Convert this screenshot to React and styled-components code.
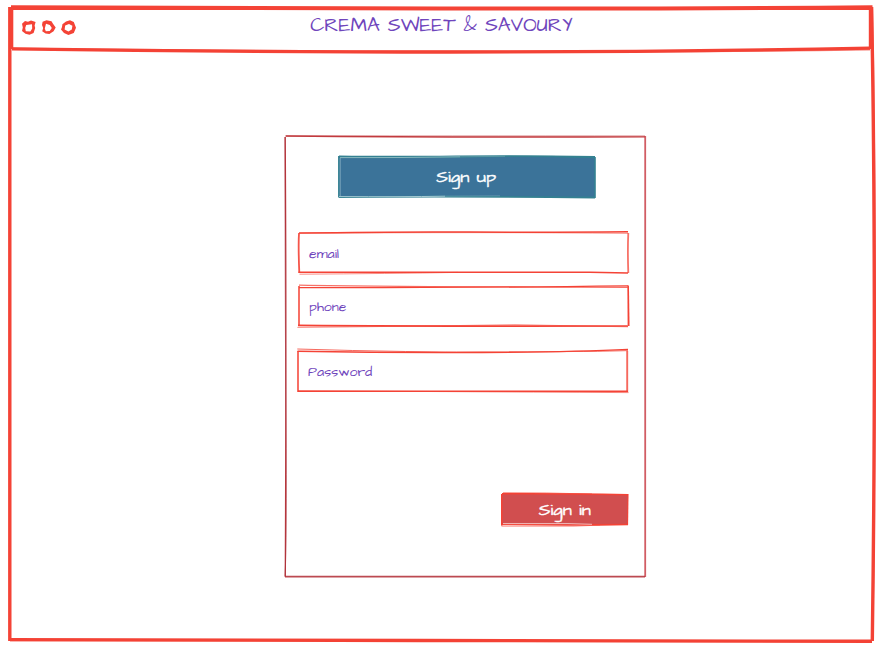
import React from "react";
import styled, { createGlobalStyle } from "styled-components";

const GlobalStyle = createGlobalStyle`
  * { box-sizing: border-box; }
  html, body, #root { height: 100%; }
  body { margin: 0; background: #fff; overflow: hidden; }
`;

const hand = `"Architects Daughter", Inter, "Open Sans", sans-serif`;

const Page = styled.div`
  height: 646px;
  width: 878px;
  padding: 8px 5px 5px 10px;
`;

const Window = styled.main`
  position: relative;
  width: 863px;
  height: 633px;
  display: flex;
  flex-direction: column;
  align-items: center;
`;

const TitleBar = styled.header`
  position: relative;
  width: 861px;
  height: 42px;
  display: grid;
  grid-template-columns: 100px 1fr 100px;
  align-items: center;
`;

const Dots = styled.svg`
  width: 58px;
  height: 18px;
  margin: -5px 0 0 9px;
  overflow: visible;
`;

const Title = styled.h1`
  margin: 0;
  padding: 0 0 8px;
  text-align: center;
  white-space: nowrap;
  color: #6f45bc;
  font: 400 20px/22px ${hand};
`;

const Card = styled.form`
  position: relative;
  width: 360px;
  height: 441px;
  margin: 86px 0 0 46px;
  padding: 20px 17px 0 13px;
  display: flex;
  flex-direction: column;
`;

const Outline = styled.svg`
  position: absolute;
  inset: 0;
  width: 100%;
  height: 100%;
  overflow: visible;
  fill: none;
  pointer-events: none;
`;

const Button = styled.button`
  position: relative;
  align-self: ${(p) => (p.$end ? "flex-end" : "center")};
  width: ${(p) => p.$width}px;
  height: ${(p) => p.$height}px;
  margin: ${(p) => p.$margin};
  padding: 0;
  border: 0;
  background: ${(p) => p.$fill};
  color: #fff;
  font: 400 16px/20px ${hand};
  -webkit-text-stroke: 0.35px #fff;
`;

const ButtonLabel = styled.span`
  position: relative;
  display: inline-block;
  transform: scaleX(1.14);
`;

const Field = styled.label`
  position: relative;
  width: 329px;
  height: ${(p) => p.$height || 40}px;
  margin: ${(p) => p.$margin};
  padding: ${(p) => p.$drop || 0}px 0 0 10.6px;
  display: flex;
  align-items: center;
  color: #6f45bc;
  font: 400 14px/18px ${hand};
`;

const RED = "#f44336";

function Sketch({ box, strokes }) {
  return (
    <Outline viewBox={box} preserveAspectRatio="none" aria-hidden="true">
      {strokes.map(([d, color, width, opacity], i) => (
        <path key={i} d={d} stroke={color} strokeWidth={width} opacity={opacity || 1} />
      ))}
    </Outline>
  );
}

const windowStrokes = [
  ["M9.8 7V641", RED, 3.4],
  ["M10 639.6Q160 640 420 640.5T872 641.3", RED, 3.4],
  ["M10 640.2Q300 641 872 641.5", RED, 2, 0.6],
  ["M871.5 7Q874 120 874.3 300T872.3 641", RED, 3.4],
  ["M872.5 7Q875.3 160 875 330T872.8 640", RED, 1.4, 0.6],
];

const barStrokes = [
  ["M11 7.2Q200 8 440 8.5T872.5 7.3", RED, 4],
  ["M12 8.4H872", RED, 3],
  ["M11.6 7V49", RED, 3.4],
  ["M870.7 7V49", RED, 3.8],
  ["M12 48.8Q240 52 450 52T870 48.2", RED, 3.3],
  ["M12 48.5Q220 51 450 51.5T870 49.5", RED, 2, 0.6],
];

const cardStrokes = [
  ["M286 136Q450 137.5 645 136.8", "#c23b3f", 1.3],
  ["M285 136Q440 136 645 136", "#c23b3f", 1, 0.65],
  ["M285.2 137Q286.5 320 285.3 577", "#b9383d", 1.3],
  ["M285 137Q285 300 286 420T285 576", "#a92f3b", 1, 0.6],
  ["M645.2 136V577", "#c94149", 1.8, 0.85],
  ["M285 576.7H645", "#b5363e", 1.7, 0.9],
];

const signUpStrokes = [
  ["M339 156.3Q390 157 456 156.3T595 157", "#348191", 1.8],
  ["M339.5 157.5Q400 158 480 156.7T595 158", "#348191", 1.2],
  ["M340 157.6Q400 157.8 460 156.8", "#a7cbd0", 0.8, 0.9],
  ["M460 156.8L505 156.3", "#a7cbd0", 0.6, 0.5],
  ["M338.8 156V197.5", "#348191", 1.5],
  ["M340.2 158V196", "#9dc1cf", 0.8, 0.8],
  ["M595 157V198", "#348191", 1.6],
  ["M339 197.2Q430 196 595 197.5", "#348191", 1.8],
  ["M339 196.6Q400 197 445 196.2", "#b3d2da", 0.9],
  ["M445 196.2L500 195.8", "#b3d2da", 0.6, 0.5],
];

const emailStrokes = [
  ["M299 233Q400 231.5 470 232T628 231.8", RED, 1.5],
  ["M300 233.2Q490 232 628 233.3", RED, 1, 0.6],
  ["M299 233Q298.2 246 299.3 273", RED, 1.8, 0.9],
  ["M628.3 233Q627.5 250 628.3 273", RED, 1.8, 0.75],
  ["M298.5 272.2H590L628 273", RED, 1.6],
  ["M299.5 274.2Q390 273.6 458 272.4", RED, 1, 0.6],
];

const phoneStrokes = [
  ["M299 287.6Q440 288 628 285.8", RED, 1.3],
  ["M299 285.2Q400 287 628 287.3", RED, 1.2, 0.75],
  ["M299 286V326", RED, 1.8, 0.85],
  ["M628.2 285.5L628.8 326", RED, 1.5],
  ["M628 288L627.7 325", RED, 1, 0.5],
  ["M298 325.4Q440 326.4 628 326", RED, 1.7],
  ["M297.4 327.4Q400 326.5 515 324.7L628 326.8", RED, 1, 0.6],
];

const passwordStrokes = [
  ["M297.5 351.2Q390 353 482 352.5T628 349.4", RED, 1.4],
  ["M297.3 349Q410 352.5 505 352T628 350.6", RED, 1, 0.8],
  ["M298 351V392", RED, 1.7, 0.9],
  ["M627.2 351V392", RED, 1.9, 0.8],
  ["M298 391.3H628", RED, 1.4],
  ["M298 390.8Q430 391.5 628.5 392.6", RED, 1, 0.65],
];

const signInStrokes = [
  ["M502 493.8Q560 493.4 628 494.8", RED, 1.5],
  ["M503 492.8Q545 492.6 592 494", RED, 1, 0.7],
  ["M501.8 494V525.5", RED, 1.6],
  ["M628 494L627.5 525", RED, 1.2, 0.9],
  ["M501 524.5Q570 525.5 628 524.5", RED, 1.5],
  ["M503 523.6H568L592 524.3", "#fff", 0.8, 0.8],
  ["M501.5 526.3H574L600 525", RED, 0.8, 0.6],
];

export default function App() {
  return (
    <>
      <GlobalStyle />
      <Page>
        <Window>
          <Sketch box="10 8 863 633" strokes={windowStrokes} />
          <TitleBar>
            <Sketch box="11 8 861 42" strokes={barStrokes} />
            <Dots viewBox="20 18 58 18" fill={RED} fillRule="evenodd" aria-hidden="true">
              <path d="M22 23.8L25 21L28 21.8L31 20.6L35.6 22L34.6 25.5L35.2 28L33.6 33L29.5 34.8L25.5 33.8L22 31L22.8 27.5ZM26.2 25L32 24.2L32.2 28.4L30.4 31.4L25.8 31.2L25.2 28Z" />
              <path d="M42.6 21.8L46.5 20.2L51.5 21.2L53 23.8L55.7 27.4L53.6 31.2L49.4 34L45.6 33.4L42.2 31.2L43.2 28L42 25ZM46 23.8L49.8 25L51.8 28L49.8 31L45.8 31.2L44.8 28.4Z" />
              <path d="M62.4 24.2L66 21.6L70 20.2L73.8 22L76 27.8L73.8 33L68.4 35L64 33L61 29.4L62 27ZM65.2 25.6L69 24L72.4 25.8L71.8 29.6L68.4 31.4L64.6 29.6Z" />
            </Dots>
            <Title>CREMA SWEET &amp; SAVOURY</Title>
          </TitleBar>
          <Card>
            <Sketch box="285 136 360 441" strokes={cardStrokes} />
            <Button type="button" $width={256} $height={41} $margin="0 0 0 8px" $fill="#3b7399">
              <Sketch box="339 156 256 41" strokes={signUpStrokes} />
              <ButtonLabel>Sign up</ButtonLabel>
            </Button>
            <Field $margin="36px 0 0 1px" $drop={2}>
              <Sketch box="299 233 329 40" strokes={emailStrokes} />
              <span>email</span>
            </Field>
            <Field $margin="13px 0 0 1px" $drop={2}>
              <Sketch box="299 286 329 40" strokes={phoneStrokes} />
              <span>phone</span>
            </Field>
            <Field $margin="25px 0 0" $height={41}>
              <Sketch box="298 351 329 41" strokes={passwordStrokes} />
              <span>Password</span>
            </Field>
            <Button type="button" $end $width={126} $height={31} $margin="102px 0 0" $fill="#d14e4f">
              <Sketch box="502 494 126 31" strokes={signInStrokes} />
              <ButtonLabel>Sign in</ButtonLabel>
            </Button>
          </Card>
        </Window>
      </Page>
    </>
  );
}
